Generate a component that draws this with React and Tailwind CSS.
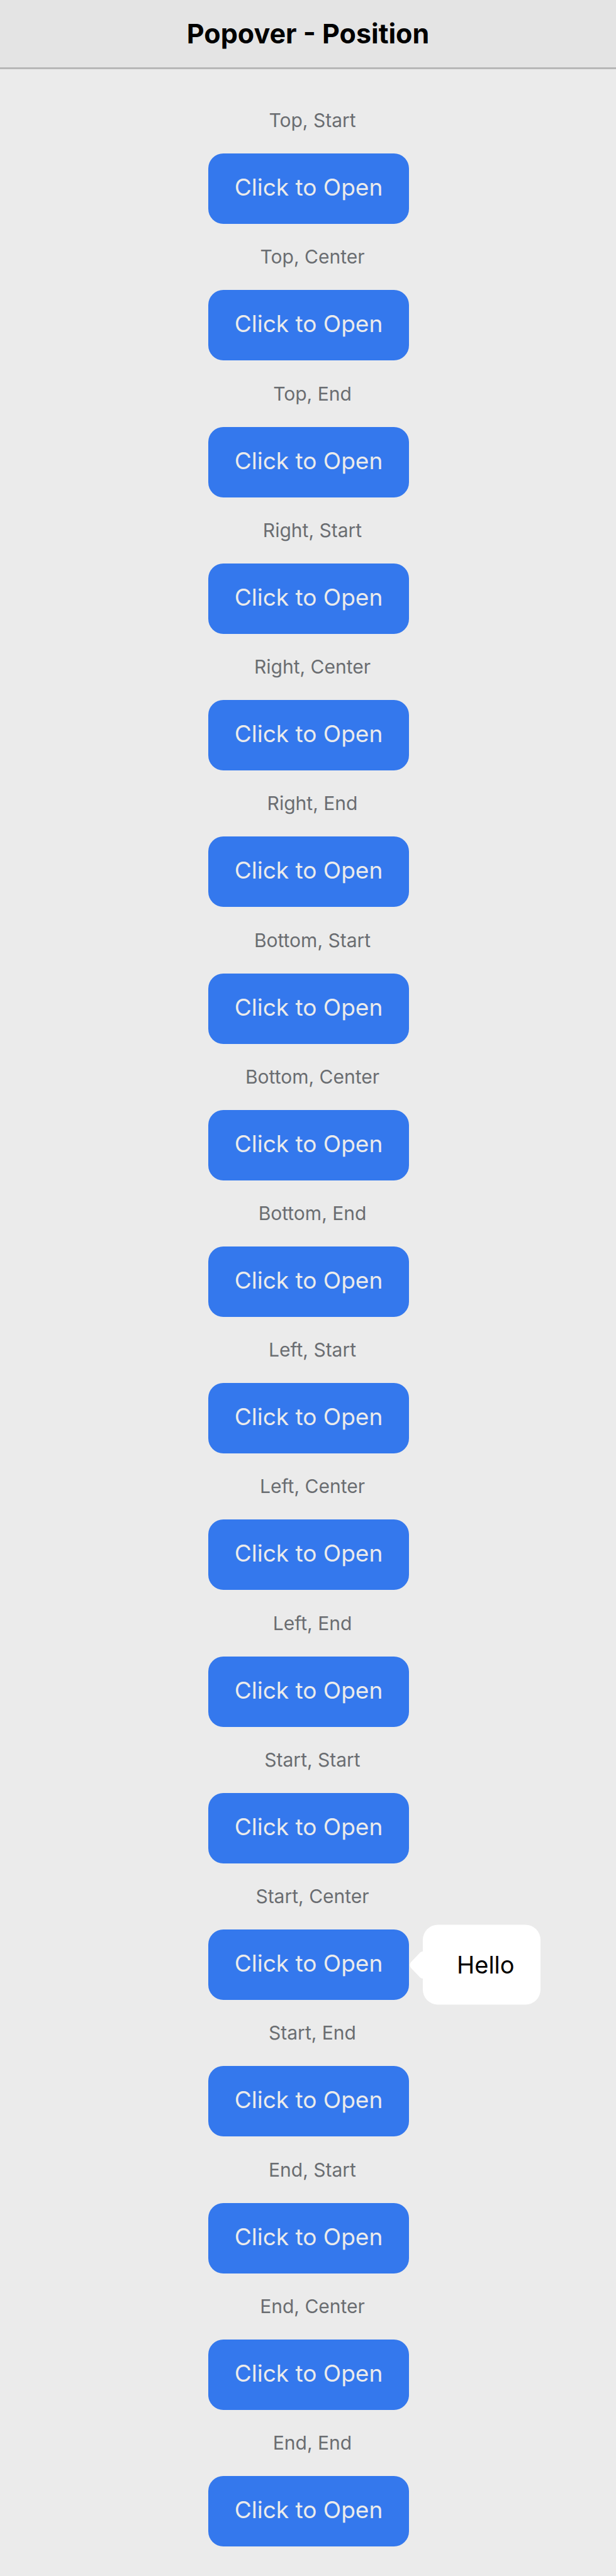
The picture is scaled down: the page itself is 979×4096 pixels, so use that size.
const sides = ["Top", "Right", "Bottom", "Left", "Start", "End"];
const alignments = ["Start", "Center", "End"];
const positions = sides.flatMap((side) =>
  alignments.map((alignment) => ({ side, alignment }))
);

function Popover() {
  return (
    <div
      role="dialog"
      aria-label="Hello"
      className="absolute top-1/2 left-full ml-[22px] flex h-[127px] w-[187px] -translate-y-1/2 items-center rounded-[24px] bg-white pb-0.5 pl-[54px] text-[38px] leading-[48px] text-black"
    >
      <svg
        className="absolute top-1/2 right-full h-[44px] w-[21px] -translate-y-1/2"
        viewBox="0 0 21 44"
        fill="white"
        aria-hidden="true"
      >
        <path d="M21 0.5C18.5 0.5 16.5 2 15 4L2 17.5Q-1 22 2 26.5L15 40C16.5 42 18.5 43.5 21 43.5Z" />
      </svg>
      Hello
    </div>
  );
}

function PositionItem({ side, alignment, open }) {
  const id = `${side}-${alignment}`.toLowerCase();
  return (
    <div className="flex flex-1 flex-col items-center justify-end">
      <p id={id} className="mb-[35px] pl-3 text-[30px] leading-[36px] text-[#6a6d71]">
        {side}, {alignment}
      </p>
      <div className="relative">
        <button
          type="button"
          aria-describedby={id}
          className="block h-[112px] w-[319px] rounded-[24px] bg-[#3478ed] pb-1 text-[37px] leading-[48px] text-[#ebebeb]"
        >
          Click to Open
        </button>
        {open && <Popover />}
      </div>
    </div>
  );
}

export default function App() {
  return (
    <div className="flex min-h-screen flex-col bg-[#ebebeb] font-['Inter',sans-serif]">
      <header className="border-b-3 border-[#b7b7b7] bg-[#e4e4e4] pt-[29px] pb-[30px] text-center">
        <h1 className="text-[43px] leading-[48px] font-bold text-black">Popover - Position</h1>
      </header>
      <main className="flex flex-1 flex-col pt-[29px] pb-[47px] pl-0.5">
        {positions.map(({ side, alignment }) => (
          <PositionItem
            key={`${side}-${alignment}`}
            side={side}
            alignment={alignment}
            open={side === "Start" && alignment === "Center"}
          />
        ))}
      </main>
    </div>
  );
}
